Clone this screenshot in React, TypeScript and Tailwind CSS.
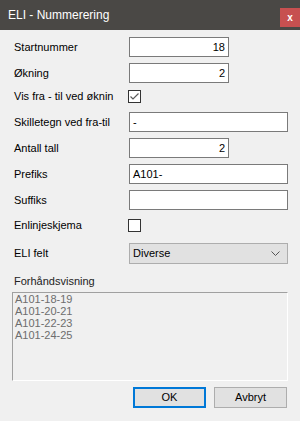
import React from "react";

const font = { fontFamily: '"Liberation Sans", Arial, sans-serif' };

function Row({ label, top, children }: { label: string; top: string; children: React.ReactNode }) {
  return (
    <div className={`flex h-5 items-center ${top}`}>
      <span className="w-[129px] shrink-0 overflow-hidden whitespace-nowrap pl-[14px] text-[11px] leading-none text-[#000]">{label}</span>
      {children}
    </div>
  );
}

function Field({ value, wide, right }: { value: string; wide?: boolean; right?: boolean }) {
  return (
    <div
      className={`flex h-5 items-center border border-[#7a7a7a] bg-white px-[3px] text-[11px] text-black ${
        wide ? "w-[159px]" : "w-[100px]"
      } ${right ? "justify-end" : "justify-start"}`}
    >
      {value}
    </div>
  );
}

function Check({ checked }: { checked?: boolean }) {
  return (
    <div className="ml-[-1px] flex h-[13px] w-[13px] items-center justify-center border border-[#333333] bg-white">
      {checked && (
        <svg width="11" height="11" viewBox="0 0 11 11">
          <path d="M1.5 5.5 L4 8 L9.5 2.5" fill="none" stroke="#5a5a5a" strokeWidth="1.2" />
        </svg>
      )}
    </div>
  );
}

export default function App() {
  const preview = ["A101-18-19", "A101-20-21", "A101-22-23", "A101-24-25"];
  return (
    <div className="flex h-[421px] w-[300px] flex-col bg-[#f0f0f0]" style={font}>
      <div className="flex h-[30px] shrink-0 items-start justify-between bg-[#4a4845]">
        <span className="pl-2 pt-[7px] text-[12px] leading-[16px] text-white">ELI - Nummerering</span>
        <div className="mt-2 flex h-[19px] w-5 items-center justify-center bg-[#c75050] text-[10px] font-bold leading-none text-white">
          x
        </div>
      </div>

      <Row label="Startnummer" top="mt-[7px]">
        <Field value="18" right />
      </Row>
      <Row label="Økning" top="mt-[6px]">
        <Field value="2" right />
      </Row>
      <Row label="Vis fra - til ved øknin" top="mt-[3px]">
        <Check checked />
      </Row>
      <Row label="Skilletegn ved fra-til" top="mt-[6px]">
        <Field value="-" wide />
      </Row>
      <Row label="Antall tall" top="mt-[6px]">
        <Field value="2" right />
      </Row>
      <Row label="Prefiks" top="mt-[6px]">
        <Field value="A101-" wide />
      </Row>
      <Row label="Suffiks" top="mt-[6px]">
        <Field value="" wide />
      </Row>
      <Row label="Enlinjeskjema" top="mt-[5px]">
        <Check />
      </Row>
      <div className="mt-[8px] flex h-[21px] items-center">
        <span className="w-[129px] shrink-0 pl-[14px] text-[11px] leading-none text-black">ELI felt</span>
        <div className="flex h-[21px] w-[159px] items-center justify-between border border-[#adadad] bg-[#e1e1e1] pl-[3px] pr-[7px] text-[11px] text-black">
          <span>Diverse</span>
          <svg width="9" height="5" viewBox="0 0 9 5">
            <path d="M0.5 0.5 L4.5 4.5 L8.5 0.5" fill="none" stroke="#555" strokeWidth="1" />
          </svg>
        </div>
      </div>

      <div className="mt-[10px] h-[14px] pl-[14px] text-[11px] leading-[14px] text-[#222]">Forhåndsvisning</div>

      <div className="mx-[12px] mt-[4px] h-[89px] w-[276px] border-t border-l border-t-[#a0a0a0] border-l-[#a0a0a0] border-r border-b border-r-white border-b-white px-[2px] text-[11px] leading-[12px] text-[#6d6d6d]">
        {preview.map((p) => (
          <div key={p}>{p}</div>
        ))}
      </div>

      <div className="mt-[6px] flex justify-end gap-2 pr-[13px]">
        <button className="flex h-[21px] w-[73px] items-center justify-center border-2 border-[#0078d7] bg-[#e1e1e1] text-[11px] text-black">
          OK
        </button>
        <button className="flex h-[21px] w-[73px] items-center justify-center border border-[#adadad] bg-[#e1e1e1] text-[11px] text-black">
          Avbryt
        </button>
      </div>
    </div>
  );
}
